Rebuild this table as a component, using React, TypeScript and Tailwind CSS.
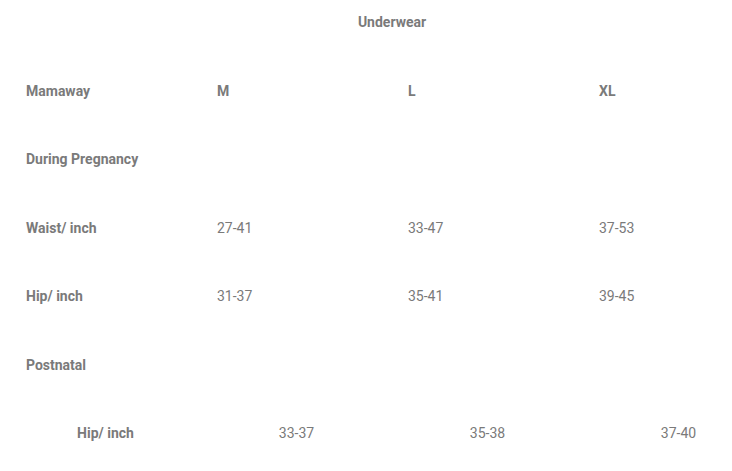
const sizes = ["M", "L", "XL"];

const rows: { label: string; values: string[] }[] = [
  { label: "Waist/ inch", values: ["27-41", "33-47", "37-53"] },
  { label: "Hip/ inch", values: ["31-37", "35-41", "39-45"] },
];

const cell = "flex h-[68.5px] items-center px-4";

export default function App() {
  return (
    <div className="h-[471px] w-[732px] overflow-hidden bg-white font-['Roboto',sans-serif] text-[14px] text-[#7a7a7a]">
      <div className="ml-[10px] mt-[-11.5px] w-[764px]">
        <div className={`${cell} justify-center font-bold`}>Underwear</div>

        <div className="grid grid-cols-4 font-bold">
          <div className={cell}>Mamaway</div>
          {sizes.map((s) => (
            <div key={s} className={cell}>
              {s}
            </div>
          ))}
        </div>

        <div className="grid grid-cols-4">
          <div className={`${cell} font-bold`}>During Pregnancy</div>
        </div>

        {rows.map((r) => (
          <div key={r.label} className="grid grid-cols-4">
            <div className={`${cell} font-bold`}>{r.label}</div>
            {r.values.map((v) => (
              <div key={v} className={cell}>
                {v}
              </div>
            ))}
          </div>
        ))}

        <div className="grid grid-cols-4">
          <div className={`${cell} font-bold`}>Postnatal</div>
        </div>

        <div className="grid grid-cols-4 text-center">
          <div className={`${cell} justify-center font-bold`}>Hip/ inch</div>
          {["33-37", "35-38", "37-40"].map((v) => (
            <div key={v} className={`${cell} justify-center`}>
              {v}
            </div>
          ))}
        </div>
      </div>
    </div>
  );
}
